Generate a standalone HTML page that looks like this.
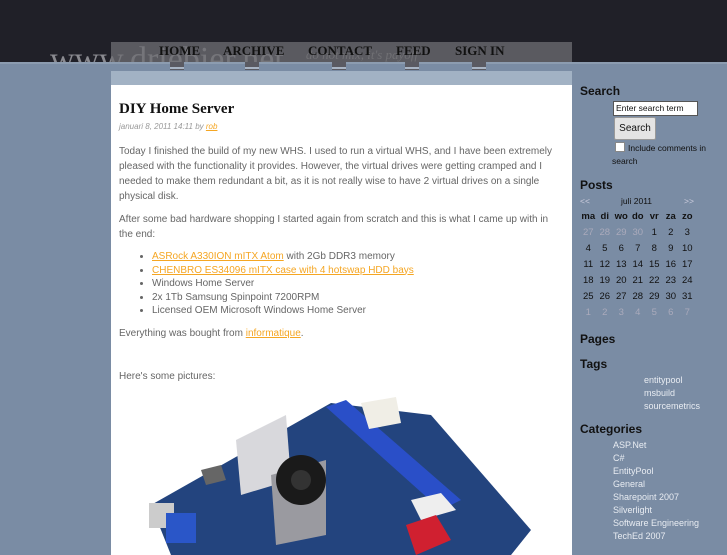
<!DOCTYPE html>
<html><head><style>
*{margin:0;padding:0;box-sizing:border-box}
body{width:727px;height:545px;overflow:hidden;background:#7a8ca4;font-family:"Liberation Sans",sans-serif;position:relative}
#top{position:absolute;left:0;top:0;width:727px;height:62px;background:#202028}
#line{position:absolute;left:0;top:62px;width:727px;height:2px;background:#8c9cb0}
#logo{position:absolute;left:50px;top:40px;height:22px;overflow:hidden;font-family:"Liberation Serif",serif;font-size:34px;color:#8a8a90;white-space:nowrap;line-height:40px}
#logo span{font-size:13px;font-style:italic;color:#777;margin-left:22px;vertical-align:top;line-height:30px}
#bar{position:absolute;left:111px;top:42px;width:461px;height:20px;background:rgba(110,110,115,.75)}
.nav{position:absolute;top:43px;font-family:"Liberation Serif",serif;font-weight:bold;font-size:13px;color:#111}
.tab{position:absolute;top:62px;width:14px;height:8px;background:#5a5a62}
.tab i{position:absolute;left:0;top:5px;width:14px;height:2px;background:#a8b4c4}
#strip{position:absolute;left:111px;top:71px;width:461px;height:14px;background:#a2b2c4}
#main{position:absolute;left:111px;top:85px;width:461px;height:470px;background:#fff;padding:17px 8px;color:#666;font-size:10px;line-height:15px}
h1{font-family:"Liberation Serif",serif;font-size:15px;color:#111;margin-bottom:2px}
.meta{font-style:italic;font-size:8px;color:#999;margin-bottom:10px}
a{color:#f5a623;text-decoration:underline}
p{margin-bottom:8px}
ul{margin:0 0 8px 33px;line-height:13.5px}
#side{position:absolute;left:580px;top:0;width:147px;color:#111}
.h{position:absolute;left:0;font-weight:bold;font-size:12px}
.lk{position:absolute;font-size:9px;color:#e8ecf2}
table{position:absolute;left:0;top:208px;border-collapse:collapse;font-size:9.5px}
td{width:16.5px;height:16px;text-align:center}
</style></head><body>
<div id="top"></div>
<div id="logo">www.driebier.net<span>do not mix, it's payoff</span></div>
<div id="bar"></div>
<div id="line"></div>
<div class="nav" style="left:159px">HOME</div>
<div class="nav" style="left:223px">ARCHIVE</div>
<div class="nav" style="left:308px">CONTACT</div>
<div class="nav" style="left:396px">FEED</div>
<div class="nav" style="left:455px">SIGN IN</div>
<div class="tab" style="left:170px"><i></i></div>
<div class="tab" style="left:245px"><i></i></div>
<div class="tab" style="left:332px"><i></i></div>
<div class="tab" style="left:405px"><i></i></div>
<div class="tab" style="left:472px"><i></i></div>
<div id="strip"></div>
<div id="main">
<h1>DIY Home Server</h1>
<div class="meta">januari 8, 2011 14:11 by <a>rob</a></div>
<p>Today I finished the build of my new WHS. I used to run a virtual WHS, and I have been extremely pleased with the functionality it provides. However, the virtual drives were getting cramped and I needed to make them redundant a bit, as it is not really wise to have 2 virtual drives on a single physical disk.</p>
<p>After some bad hardware shopping I started again from scratch and this is what I came up with in the end:</p>
<ul>
<li><a>ASRock A330ION mITX Atom</a> with 2Gb DDR3 memory</li>
<li><a>CHENBRO ES34096 mITX case with 4 hotswap HDD bays</a></li>
<li>Windows Home Server</li>
<li>2x 1Tb Samsung Spinpoint 7200RPM</li>
<li>Licensed OEM Microsoft Windows Home Server</li>
</ul>
<p>Everything was bought from <a>informatique</a>.</p>
<p style="margin-top:28px">Here's some pictures:</p>
<svg width="460" height="170" style="position:absolute;left:0;top:300px">
<polygon points="40,120 220,18 320,30 420,145 400,170 60,170" fill="#23447e"/>
<polygon points="215,22 235,15 350,115 330,125" fill="#2a4fc8"/>
<polygon points="300,115 330,108 345,125 310,135" fill="#eee"/>
<polygon points="125,55 175,30 180,95 130,110" fill="#d8d8dc"/>
<polygon points="160,90 215,75 215,150 165,160" fill="#9a9aa0"/>
<circle cx="190" cy="95" r="25" fill="#1a1a1a"/>
<circle cx="190" cy="95" r="10" fill="#333"/>
<polygon points="295,140 325,130 340,155 305,170" fill="#d02030"/>
<rect x="38" y="118" width="25" height="25" fill="#ccc"/>
<rect x="55" y="128" width="30" height="30" fill="#2a56c8"/>
<polygon points="250,18 285,12 290,38 258,44" fill="#f0eee6"/>
<polygon points="90,85 110,80 115,95 95,100" fill="#666"/>
</svg>
</div>
<div id="side">
<div class="h" style="top:84px">Search</div>
<div style="position:absolute;left:33px;top:101px;width:85px;height:15px;background:#fff;border:1px solid #555;font-size:8.5px;padding:1px 2px">Enter search term</div>
<div style="position:absolute;left:34px;top:117px;width:42px;height:23px;background:#e4e4e4;border:1px solid #999;border-radius:2px;font-size:10px;text-align:center;line-height:21px">Search</div>
<div style="position:absolute;left:35px;top:142px;width:10px;height:10px;background:#fff;border:1px solid #888"></div>
<div style="position:absolute;left:32px;top:142px;width:110px;font-size:8.5px;line-height:13px;text-indent:16px">Include comments in search</div>
<div class="h" style="top:178px">Posts</div>
<div style="position:absolute;left:0;top:196px;font-size:8.5px;color:#ccd"> &lt;&lt;</div>
<div style="position:absolute;left:41px;top:196px;font-size:8.5px">juli 2011</div>
<div style="position:absolute;left:104px;top:196px;font-size:8.5px;color:#ccd">&gt;&gt;</div>
<table>
<tr style="font-weight:bold"><td>ma</td><td>di</td><td>wo</td><td>do</td><td>vr</td><td>za</td><td>zo</td></tr>
<tr><td style="color:#aab">27</td><td style="color:#aab">28</td><td style="color:#aab">29</td><td style="color:#aab">30</td><td>1</td><td>2</td><td>3</td></tr>
<tr><td>4</td><td>5</td><td>6</td><td>7</td><td>8</td><td>9</td><td>10</td></tr>
<tr><td>11</td><td>12</td><td>13</td><td>14</td><td>15</td><td>16</td><td>17</td></tr>
<tr><td>18</td><td>19</td><td>20</td><td>21</td><td>22</td><td>23</td><td>24</td></tr>
<tr><td>25</td><td>26</td><td>27</td><td>28</td><td>29</td><td>30</td><td>31</td></tr>
<tr style="color:#aab"><td>1</td><td>2</td><td>3</td><td>4</td><td>5</td><td>6</td><td>7</td></tr>
</table>
<div class="h" style="top:332px">Pages</div>
<div class="h" style="top:357px">Tags</div>
<div class="lk" style="left:64px;top:375px">entitypool</div>
<div class="lk" style="left:64px;top:388px">msbuild</div>
<div class="lk" style="left:64px;top:401px">sourcemetrics</div>
<div class="h" style="top:422px">Categories</div>
<div class="lk" style="left:33px;top:440px">ASP.Net</div>
<div class="lk" style="left:33px;top:453px">C#</div>
<div class="lk" style="left:33px;top:466px">EntityPool</div>
<div class="lk" style="left:33px;top:479px">General</div>
<div class="lk" style="left:33px;top:492px">Sharepoint 2007</div>
<div class="lk" style="left:33px;top:505px">Silverlight</div>
<div class="lk" style="left:33px;top:518px">Software Engineering</div>
<div class="lk" style="left:33px;top:531px">TechEd 2007</div>
</div>
</body></html>
